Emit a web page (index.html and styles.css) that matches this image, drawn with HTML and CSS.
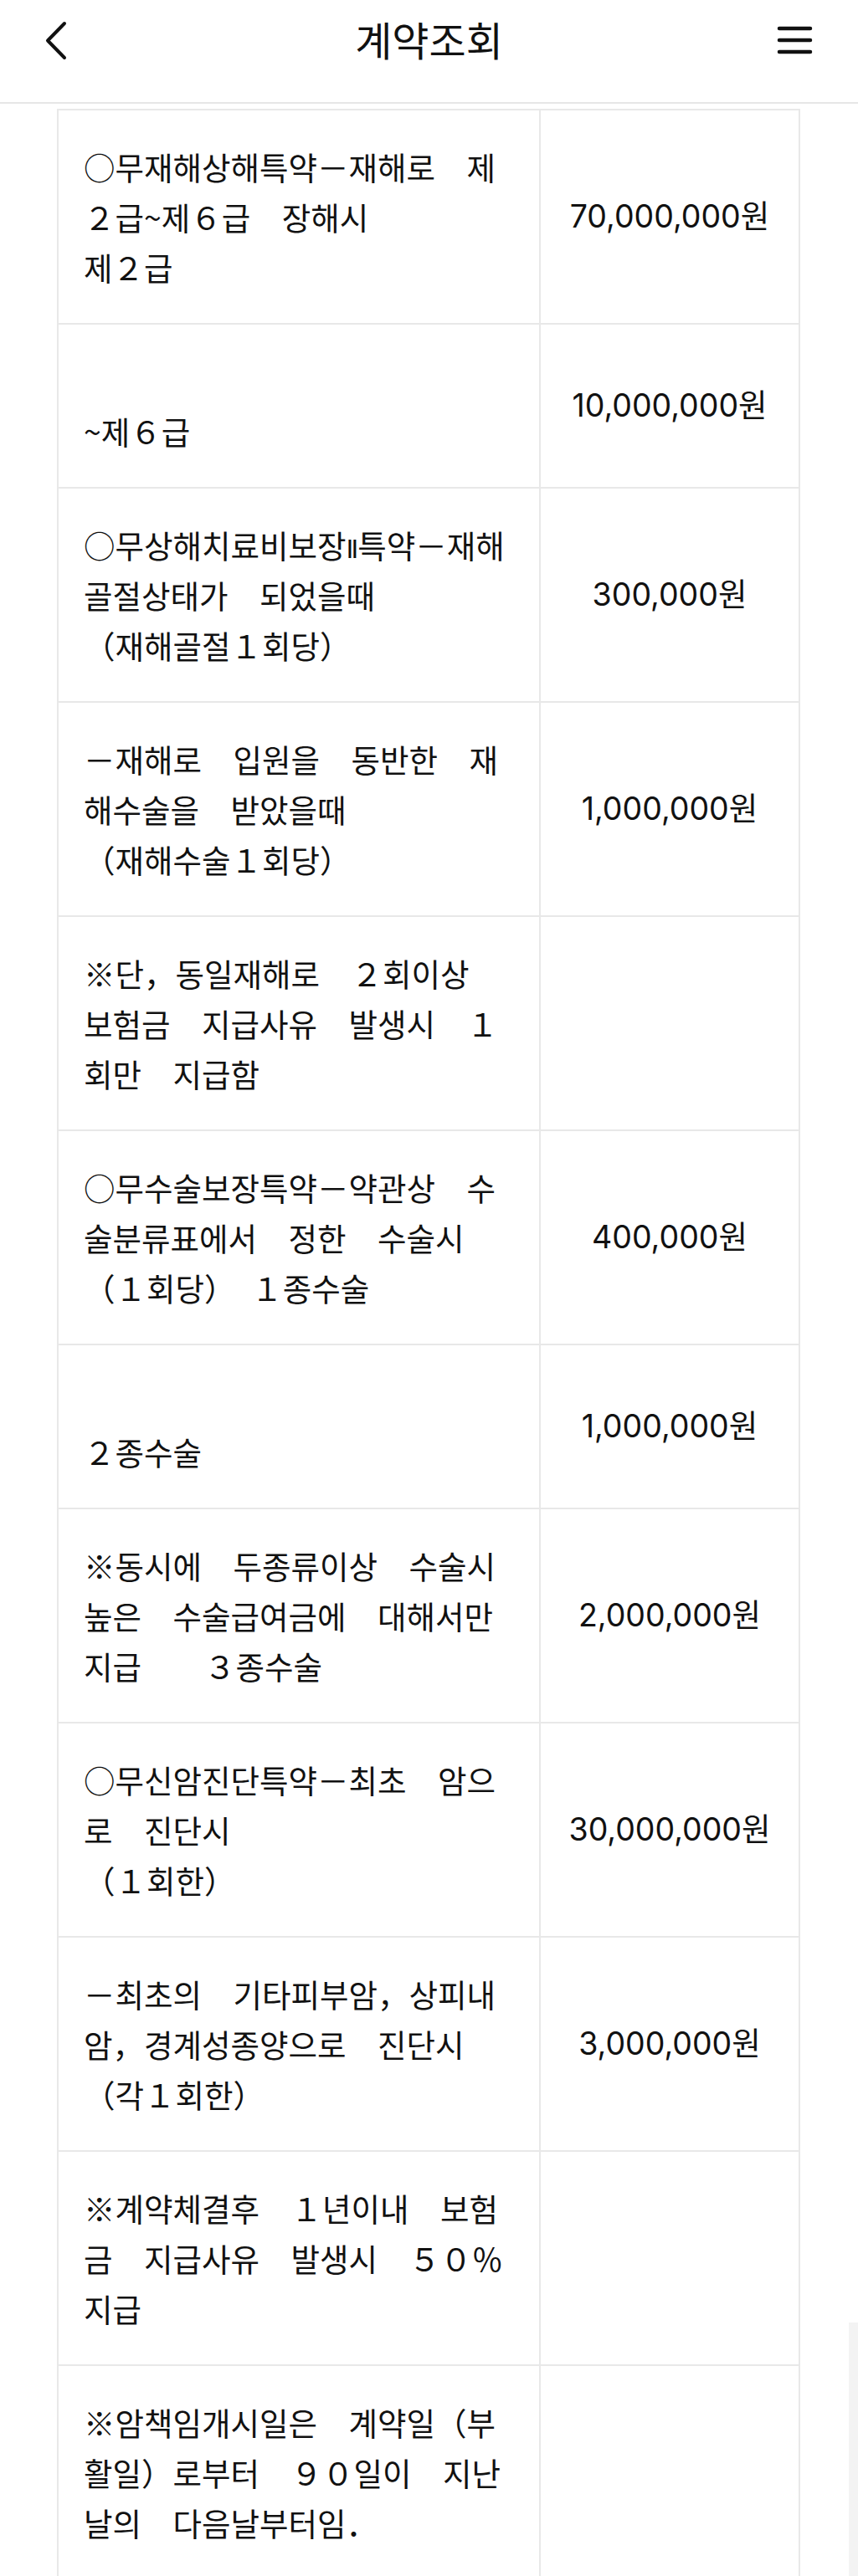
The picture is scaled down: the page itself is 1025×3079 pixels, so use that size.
FILE: index.html
```html
<!DOCTYPE html>
<html lang="ko">
<head>
<meta charset="utf-8">
<title>계약조회</title>
<link rel="stylesheet" href="styles.css">
</head>
<body>
<header class="topbar">
  <div class="topbar-side">
    <svg class="icon-back" width="27" height="47" viewBox="0 0 27 47" aria-hidden="true">
      <path d="M24 3 L4 23.5 L24 44" fill="none" stroke="#111" stroke-width="4" stroke-linecap="round" stroke-linejoin="round"/>
    </svg>
  </div>
  <h1 class="topbar-title">계약조회</h1>
  <div class="topbar-side topbar-side-right">
    <svg class="icon-menu" width="44" height="34" viewBox="0 0 44 34" aria-hidden="true">
      <path d="M3 3 H40 M3 17 H40 M3 31 H40" fill="none" stroke="#111" stroke-width="4.5" stroke-linecap="round"/>
    </svg>
  </div>
</header>

<main class="sheet">
  <div class="cell desc">○무재해상해특약－재해로　제<br>２급~제６급　장해시<br>제２급</div>
  <div class="cell amount">70,000,000원</div>

  <div class="cell desc"><br>~제６급</div>
  <div class="cell amount">10,000,000원</div>

  <div class="cell desc">○무상해치료비보장<span class="numeral">Ⅱ</span>특약－재해<br>골절상태가　되었을때<br>（재해골절１회당）</div>
  <div class="cell amount">300,000원</div>

  <div class="cell desc">－재해로　입원을　동반한　재<br>해수술을　받았을때<br>（재해수술１회당）</div>
  <div class="cell amount">1,000,000원</div>

  <div class="cell desc">※단，동일재해로　２회이상<br>보험금　지급사유　발생시　１<br>회만　지급함</div>
  <div class="cell amount"></div>

  <div class="cell desc">○무수술보장특약－약관상　수<br>술분류표에서　정한　수술시<br>（１회당）　１종수술</div>
  <div class="cell amount">400,000원</div>

  <div class="cell desc"><br>２종수술</div>
  <div class="cell amount">1,000,000원</div>

  <div class="cell desc">※동시에　두종류이상　수술시<br>높은　수술급여금에　대해서만<br>지급　　３종수술</div>
  <div class="cell amount">2,000,000원</div>

  <div class="cell desc">○무신암진단특약－최초　암으<br>로　진단시<br>（１회한）</div>
  <div class="cell amount">30,000,000원</div>

  <div class="cell desc">－최초의　기타피부암，상피내<br>암，경계성종양으로　진단시<br>（각１회한）</div>
  <div class="cell amount">3,000,000원</div>

  <div class="cell desc">※계약체결후　１년이내　보험<br>금　지급사유　발생시　５０％<br>지급</div>
  <div class="cell amount"></div>

  <div class="cell desc">※암책임개시일은　계약일（부<br>활일）로부터　９０일이　지난<br>날의　다음날부터임．</div>
  <div class="cell amount"></div>
</main>

<div class="scroll-thumb"></div>
</body>
</html>
```

FILE: styles.css
```css
html, body {
  margin: 0;
  padding: 0;
  background: #ffffff;
}

body {
  font-family: "Noto Sans CJK KR", "Noto Sans", sans-serif;
  color: #111111;
  overflow: hidden;
}

.topbar {
  display: grid;
  grid-template-columns: 1fr auto 1fr;
  align-items: center;
  height: 96px;
  padding: 0 53px 26px 53px;
  border-bottom: 2px solid #e6e6e6;
}

.topbar-side {
  display: flex;
  align-items: center;
}

.topbar-side-right {
  justify-content: flex-end;
}

.icon-back,
.icon-menu {
  display: block;
}

.topbar-title {
  margin: 0;
  font-size: 48px;
  font-weight: 400;
  line-height: 60px;
  color: #111111;
  position: relative;
  top: -2px;
}

.sheet {
  display: grid;
  grid-template-columns: 576px 310px;
  width: 886px;
  margin: 6px 0 0 68px;
  border-left: 2px solid #e8e8e8;
  border-top: 2px solid #e8e8e8;
}

.cell {
  box-sizing: border-box;
  border-right: 2px solid #e8e8e8;
  border-bottom: 2px solid #e8e8e8;
  padding: 37px 0 37px 30px;
  font-size: 37.5px;
  line-height: 60px;
  white-space: nowrap;
}

.numeral {
  font-family: "DejaVu Sans", sans-serif;
  font-size: 30px;
  line-height: 0;
  letter-spacing: -1px;
}

.amount {
  display: flex;
  align-items: center;
  justify-content: center;
  padding-left: 0;
  font-family: "Inter", "Noto Sans CJK KR", sans-serif;
}

.scroll-thumb {
  position: absolute;
  left: 1014px;
  top: 2776px;
  width: 11px;
  height: 303px;
  background: #f3f3f3;
}
```
